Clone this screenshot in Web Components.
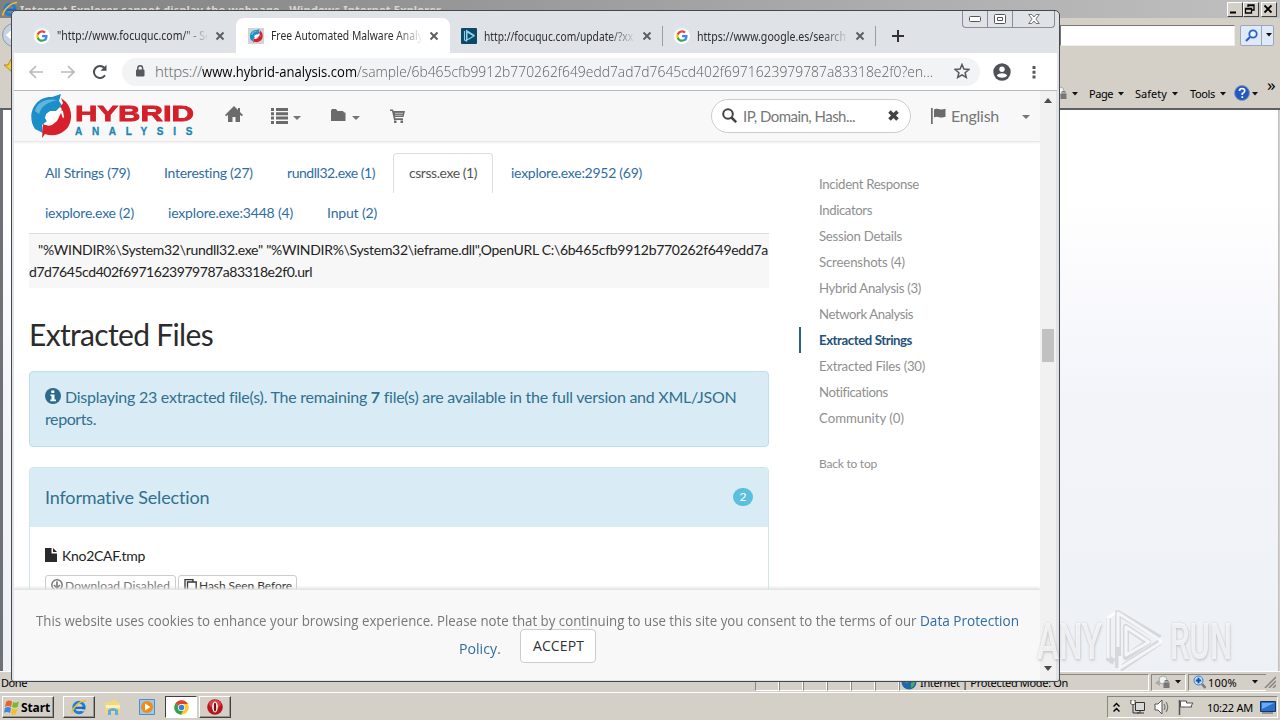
<!DOCTYPE html>
<html lang="en"><head><meta charset="utf-8"><title>Desktop</title>
<style>body{margin:0;width:1280px;height:720px;overflow:hidden;font-family:"Noto Sans","Liberation Sans",sans-serif}</style></head>
<body><desk-top></desk-top>
<script>
const def=(name,html,after)=>{const t=document.createElement('template');t.innerHTML=html;
customElements.define(name,class extends HTMLElement{connectedCallback(){if(this.shadowRoot)return;this.attachShadow({mode:'open'}).append(t.content.cloneNode(true));if(after)after(this,this.shadowRoot)}})};

const G='<path fill="#4285f4" d="M15 8.2c0-.5 0-1-.1-1.4H8v2.7h3.9a3.4 3.4 0 0 1-1.4 2.2v1.9h2.4C14.2 12.3 15 10.4 15 8.2z"/><path fill="#34a853" d="M8 15.2c1.9 0 3.6-.6 4.8-1.7l-2.3-1.8c-.7.4-1.5.7-2.5.7-1.9 0-3.5-1.3-4.1-3H1.5v1.9A7.2 7.2 0 0 0 8 15.2z"/><path fill="#fbbc05" d="M3.9 9.4a4.3 4.3 0 0 1 0-2.800V4.700H1.500a7.200 7.200 0 0 0 0 6.500z"/><path fill="#ea4335" d="M8 3.600c1.100 0 2 .4 2.800 1.100l2-2A7.200 7.200 0 0 0 1.500 4.700l2.400 1.900c.6-1.700 2.200-3 4.100-3z"/>';
const swirl='<path fill="#1c8fc9" d="M31 0 29 7l4 6-5 6-7-4-7 6 3 6-5 4 1 8-8-4C-4 22 4 2 22 3z"/><path fill="#8ed0ee" opacity=".6" d="M5 17C7 8 16 4 28 6 18 8 12 11 9 20z"/><path fill="#d8202c" d="m31 4 5 4c8 9 6 24-2 29-6 5-13 5-19 3l-3 4 1-14 9 3 7-3 5-7-1-6-4-2 4-6z"/><path fill="#1c8fc9" d="m13 16 9-5 6 4-5 5-5 1-5 5z"/><path fill="#d8202c" d="m31 19 3 8-9 8-11-2 8-2 5-4z"/><path fill="#fff" d="m30 13-4 4-6 0-4 3-1 4 3 5-5 2 7 0 0-3 2-1 1-3 4-1 3-3-1-2 3-3z"/>';
const IE='<circle cx="8" cy="8.500" r="5.200" fill="none" stroke="#1d7fdc" stroke-width="3"/><path d="M4 8.800h10" stroke="#1668c0" stroke-width="2.200"/><path d="M10.500 10.500h4l-1.500 2-3-.5z" fill="#d5d6d5"/><path d="M1 14.500C.5 10 8 2 15 1.500" fill="none" stroke="#f4bd2a" stroke-width="1.700"/>';
const icons={
g:[16,16,'<circle cx="8" cy="8" r="8" fill="#fff"/><g transform="translate(1.700 1.700) scale(.79)">'+G+'</g>'],
hy:[16,16,'<path fill="#d3d3d3" d="M0 0h16v16H0z"/><g transform="translate(1.500 1) scale(.32)">'+swirl+'</g>'],
swirl:[42,44,swirl],
any:[16,16,'<rect width="16" height="16" rx="1" fill="#0c4867"/><path d="M6 4v8l7-4zM3.500 3v9l2 1V2.500l8 5" fill="none" stroke="#8fd0ea" stroke-width="1.100"/>'],
x:[10,10,'<path d="m1.500 1.500 7 7m0-7-7 7" stroke="#5a5d61" stroke-width="1.900"/>'],
plus:[12,12,'<path d="M6 0v12M0 6h12" stroke="#303236" stroke-width="2"/>'],
back:[14,14,'<path d="M14 7H1.500M7 1 1 7l6 6" fill="none" stroke="#b8babd" stroke-width="1.700"/>'],
fwd:[14,14,'<path d="M0 7h12.500M7 1l6 6-6 6" fill="none" stroke="#b8babd" stroke-width="1.700"/>'],
reload:[16,16,'<path d="M13 11.300A6 6 0 1 1 12.400 4" fill="none" stroke="#4b4e52" stroke-width="2"/><path d="M14.500.8v6h-6z" fill="#4b4e52"/>'],
lock:[10,12,'<rect x="1" y="4.500" width="8.500" height="7" rx="1" fill="#55585c"/><path d="M2.800 5V3.200a2.400 2.400 0 0 1 4.800 0V5" fill="none" stroke="#55585c" stroke-width="1.400"/>'],
star:[16,16,'<path d="m8 1.500 1.900 4.600 5 .4-3.800 3.200 1.200 4.800L8 11.900l-4.300 2.600 1.200-4.800L1.100 6.500l5-.4z" fill="none" stroke="#55585c" stroke-width="1.500"/>'],
avatar:[18,18,'<circle cx="9" cy="9" r="8.700" fill="#4f5358"/><circle cx="9" cy="6.300" r="2.700" fill="#fff"/><path d="M3.800 12.500c2-3 8.400-3 10.400 0-2.300 3-8 3-10.400 0z" fill="#fff"/>'],
dots:[4,14,'<path d="M.5 1h3v3h-3zM.5 5.700h3v3h-3zM.5 10.400h3v3h-3z" fill="#55585c"/>'],
home:[18,17,'<path d="M9 0 0 9l1 1.200L3 9v7h4.500v-5h3v5H15V9l2 1.200L18 9l-3-3V2h-2v2z" fill="#6b6b6b"/>'],
list:[17,16,'<path d="M0 0h3v3H0zm5 0h12v3H5zM0 4.300h3v3H0zm5 0h12v3H5zM0 8.600h3v3H0zm5 0h12v3H5zM0 12.900h3v3H0zm5 0h12v3H5z" fill="#6b6b6b"/>'],
caret:[8,4,'<path d="M0 0h8L4 4z" fill="#757575"/>'],
folder:[15,13,'<path d="M0 1.500 1 0h4l1.500 2H12l1 1.500h1.500V12H0z" fill="#6b6b6b"/>'],
cart:[16,14,'<path d="M0 .5h3l.6 1.600H15l-1.500 6H5l.4 1.200H13V11H4L2 2H0zM4 11.500h2.500V14H4zm6.500 0H13V14h-2.500z" fill="#6b6b6b"/><path d="M5 4.300h8M5 6.300h7.500" stroke="#f8f8f8" stroke-width=".6"/>'],
search:[15,15,'<circle cx="6" cy="6" r="4.800" fill="none" stroke="#444" stroke-width="2"/><path d="m9.500 9.500 4.700 4.700" stroke="#444" stroke-width="2.500"/>'],
clear:[11,11,'<path d="m1.500 1.500 8 8m0-8-8 8" stroke="#444" stroke-width="3.600"/>'],
flag:[15,16,'<path d="M0 0h1.700v16H0zM3 1.500C6-.5 8 3 14.500.8v8C9 11 6.500 7 3 9.500z" fill="#6b6b6b"/>'],
info:[16,16,'<circle cx="8" cy="8" r="8" fill="#2b6a8a"/><path d="M6.300 2.500h3v2.500h-3zM5.500 6.500h4v5H11v1.700H5.300v-1.700h1.200V8h-1z" fill="#fff"/>'],
file:[12,14,'<path d="M0 0h6.500v5.500H12V14H0zM8 0l4 4H8z" fill="#2a2a2a"/>'],
down:[12,12,'<circle cx="6" cy="6" r="5.200" fill="none" stroke="#777" stroke-width="1.500"/><path d="M6 2.500V9M3 6l3 3 3-3" fill="none" stroke="#777" stroke-width="1.700"/>'],
copy:[13,13,'<path d="M3.500 3h8.700v10H3.500zM1 10V.7h8V3" fill="none" stroke="#333" stroke-width="1.300"/>'],
up:[8,5,'<path d="M0 5h8L4 0z" fill="#4a4a4a"/>'],dn:[8,5,'<path d="M0 0h8L4 5z" fill="#4a4a4a"/>'],
bc:[6,4,'<path d="M0 0h6L3 3.500z" fill="#111"/>'],
ie:[16,16,IE],
exp:[18,17,'<path d="M1 3h6l1-2h5v3h3v10H1z" fill="#f2d684"/><path d="M2 6h14v3H2z" fill="#fcf0b8"/><path d="M4 16v-5q5-4 10 0v5h-3v-4H7v4z" fill="#5db1d8"/>'],
play:[16,16,'<path d="M.5.5h15v15H.5z" fill="#9cc9ec" stroke="#4b8ec8"/><circle cx="8" cy="8" r="6" fill="#f08a18"/><path d="M6 4.500 11.500 8 6 11.500z" fill="#fff"/>'],
chrome:[15,15,'<circle cx="7.500" cy="7.500" r="7.200" fill="#f9cc2a"/><path d="M7.500 7.500 1.300 3.800A7.200 7.200 0 0 1 13.800 4H7.500z" fill="#e3402d"/><path d="M1.300 3.800A7.200 7.200 0 0 0 7 14.700l3-5.700-2.500-1.500z" fill="#31a350"/><circle cx="7.500" cy="7.500" r="3.600" fill="#fff"/><circle cx="7.500" cy="7.500" r="2.800" fill="#3d7de0"/>'],
opera:[16,16,'<circle cx="8" cy="8" r="7.800" fill="#b8141c"/><ellipse cx="8" cy="5" rx="6" ry="4" fill="#e4666a" opacity=".6"/><ellipse cx="8" cy="8" rx="2.800" ry="5.400" fill="#fff"/><ellipse cx="8" cy="8" rx="1.200" ry="4.500" fill="#7d0c10"/>'],
win:[16,16,'<path d="M2 3q3-2.500 6-.5L7 8Q4 6 1 8z" fill="#e8642a"/><path d="M9 3q3 1.500 6-.5L13.500 8Q11 9.500 8 8z" fill="#7cb82f"/><path d="M1 9q3-2 6 0l-1 5q-3-2-6-.2z" fill="#3f87d9"/><path d="M8 9.500q3 1.500 5.500 0L12 15q-3 1.500-5 0z" fill="#f6c023"/>'],
chev:[7,11,'<path d="m.5 4.500 3-3 3 3m-6 5 3-3 3 3" fill="none" stroke="#000" stroke-width="1.500"/>'],
net:[16,16,'<path d="M5.500 3.500h9v8h-9z" fill="#d8d8d8" stroke="#333"/><path d="M1 1v4h4V1M3 5v9h6M7 14h7M10 12v2" fill="none" stroke="#333"/><path d="M1.500 2h3v3h-3z" fill="#fff"/>'],
snd:[16,16,'<path d="M1 5h3l4-4v14l-4-4H1z" fill="#fff" stroke="#555"/><path d="M10 5q2 3 0 6m2-8q3.500 5 0 10" fill="none" stroke="#777" stroke-width="1.200"/>'],
wf:[16,16,'<path d="M1.500 1v15" stroke="#555" stroke-width="1.500"/><path d="M2.500 2h6v2H15l-2 3 1 1H8.500V8h-6z" fill="#fff" stroke="#555"/>'],
desk:[16,13,'<path d="M.5.5h15v10H.5z" fill="#2c6ecb" stroke="#16365f"/><path d="M2 2h12L2 8z" fill="#69aaf0"/><path d="M2 12h11" stroke="#555"/>'],
globe:[16,16,'<circle cx="8" cy="8" r="7.500" fill="#2466ae"/><path d="M3 4q4-4 6 0l-1 4-3 1-2-2zm7 5 4-2q0 5-4 7z" fill="#4bb04f"/>'],
zoom:[13,14,'<circle cx="5.500" cy="5.500" r="4.500" fill="#bfe0fa" stroke="#3b7cc8"/><path d="M5.500 2.800v5.400M2.800 5.500h5.400" stroke="#1452a8" stroke-width="2"/><path d="m9 9 3.500 4" stroke="#777" stroke-width="2.500"/>'],
priv:[15,14,'<path d="m0 8 5-4v7z" fill="#aaa"/><circle cx="8" cy="5" r="4" fill="#f1f1f1" stroke="#aaa"/><path d="M8.500 7.500h6V13h-6z" fill="#777"/><path d="M10 7.500V5.500h3v2" fill="none" stroke="#777"/>'],
help:[16,16,'<circle cx="8" cy="8" r="7.500" fill="#2458c2" stroke="#8a98b8"/><path d="M5.500 6q0-2.500 2.600-2.500T10.700 6Q10.500 7.500 8.300 8.500V10m0 1.300v1.700" fill="none" stroke="#fff" stroke-width="1.700"/>'],
mag:[13,13,'<circle cx="8" cy="5" r="3.700" fill="#e8f3ff" stroke="#2b62c8" stroke-width="1.800"/><path d="m5 8-4 4" stroke="#2b62c8" stroke-width="2.200"/>'],
chair:[12,6,'<rect x=".5" y=".5" width="11" height="5" rx="1" fill="#fff" stroke="#555"/>'],
cmax:[12,10,'<rect x=".5" y=".5" width="11" height="9" rx="1" fill="#fff" stroke="#555"/><path d="M3.500 3.500h5v3h-5z" fill="#fff" stroke="#555"/>'],
cx:[12,10,'<path d="M.7.5h3.200L6 3 8.100.5h3.200L7.900 5l3.400 4.500H8.100L6 7 3.900 9.500H.7L4.100 5z" fill="#fff" stroke="#666" stroke-width=".9"/>'],
min:[12,10,'<path d="M2 8.500h6" stroke="#000" stroke-width="2"/>'],
res:[12,10,'<path d="M4 3V1h6v5H8M4 1.500h6M1.500 4.500h6V9h-6zM1.500 5h6" fill="none" stroke="#000" stroke-width="1.300"/>'],
cl:[12,10,'<path d="m2.500 1.500 7 7m0-7-7 7" stroke="#000" stroke-width="1.800"/>'],
fav:[10,18,'<path d="M0 7h4l3-6 3 6v10l-4-5z" fill="#f5cf3a" stroke="#b68b1b"/>'],
orb:[18,24,'<circle cx="14" cy="12" r="11.500" fill="#c5d2e0" stroke="#8c98a5"/><path d="m14 7-6 5 6 5" fill="none" stroke="#fff" stroke-width="3"/>'],
grip:[12,12,'<path d="M12 1 1 12M12 5 5 12M12 9 9 12" stroke="#868278" stroke-width="1.500"/>'],
wm:[60,64,'<g fill="none" stroke-linejoin="round"><path d="M2 9v40l6 4M12 59V4l42 25M54 33 14 60M20 18v30l22-15z" stroke="#9da0a5" stroke-opacity=".3" stroke-width="6"/><path d="M2 49V9l7-5M12 38V4l42 27v3L14 59V47M20 46V18l23 15z" stroke="#fff" stroke-opacity=".75" stroke-width="3"/></g>']
};
customElements.define('ui-icon',class extends HTMLElement{connectedCallback(){if(this.shadowRoot)return;const [w,h,b]=icons[this.getAttribute('n')];
this.attachShadow({mode:'open'}).innerHTML=`<style>:host{display:block;flex:none;width:${w}px;height:${h}px}svg{display:block}</style><svg width="${w}" height="${h}" viewBox="0 0 ${w} ${h}">${b}</svg>`}});

/* One line of text set to an exact measure: tracking by default, horizontal scaling with "stretch". */
customElements.define('fit-text',class extends HTMLElement{connectedCallback(){if(this.shadowRoot)return;
const r=this.attachShadow({mode:'open'});r.innerHTML='<style>:host{display:inline-block;flex:none;white-space:pre;text-align:left}span{display:inline-block;transform-origin:0 50%}</style><span><slot></slot></span>';
const w=+this.getAttribute('w'),s=r.querySelector('span');const n=s.getBoundingClientRect().width;this.style.width=w+'px';
if(this.hasAttribute('stretch'))s.style.transform=`scaleX(${w/n})`;else s.style.letterSpacing=(w-n)/this.textContent.length+'px'}});

def('browser-tab',`<style>:host{display:flex;align-items:center;box-sizing:border-box;height:35px;margin-top:7px;flex:none;font:12px "Noto Sans",sans-serif;color:#2b2d30;padding-left:12px;border-radius:8px 8px 0 0}
:host([active]){background:#fff}
.t{width:150px;margin-left:7px;overflow:hidden;-webkit-mask:linear-gradient(90deg,#000 125px,transparent 152px)}:host([sep]){border-right:1px solid #9a9da2;border-radius:0;height:20px;margin-top:15px}ui-icon.x{margin-left:8px}</style>
<span class="i"></span><div class="t"><slot></slot></div><ui-icon class="x" n="x"></ui-icon>`,(h,r)=>{r.querySelector('.i').innerHTML=`<ui-icon n="${h.getAttribute('icon')}"></ui-icon>`});

def('side-link',`<style>:host{display:flex;align-items:center;height:26px;box-sizing:border-box;padding:0 0 0 18px;border-left:2px solid transparent;font-size:13.200px;color:#8f8f8f}:host([active]){border-color:#2b6080;color:#23527c;font-weight:700}</style><slot></slot>`);
def('string-tab',`<style>:host{display:flex;align-items:center;box-sizing:border-box;height:40px;padding:0 15px 2px;border:1px solid transparent;border-bottom:0;border-radius:4px 4px 0 0;font-size:14px;color:#2f6da3}:host([active]){border-color:#ddd;color:#555}</style><slot></slot>`);

def('chrome-window',`<style>
:host{display:flex;flex-direction:column;box-sizing:border-box;border:1px solid #46484d;border-radius:5px 5px 3px 3px;background:#dfe2e7;overflow:hidden}
.strip{display:flex;height:42px;padding-left:10px;flex:none}
.wb{display:flex;margin-left:auto;margin-right:4px;height:16px;border:1px solid #8a8d93;border-top:0;border-radius:0 0 4px 4px}.wb div{display:flex;align-items:center;justify-content:center;border-right:1px solid #8a8d93;width:24px}.wb div:last-child{width:41px;border:0}
.plus{margin:19px 0 0 16px}
.bar{display:flex;align-items:center;height:37px;background:#fff;margin:0 2px;border-bottom:1px solid #b6b8b9;padding-left:15px;flex:none}
.omni{display:flex;align-items:center;box-sizing:border-box;width:858px;height:28px;border-radius:14px;background:#f1f3f4;margin-left:14px;padding:0 0 1px 13px;font:300 15px "Open Sans",sans-serif;color:#5c5f63}
.d{color:#000;font-weight:400}
.view{display:flex;flex:1;min-height:0;margin:0 3px 1px 2px}
.sb{width:16px;background:#f1f1f1;display:flex;flex-direction:column;align-items:center;padding:7px 0 9px;box-sizing:border-box}
.thumb{width:12px;height:33px;background:#c1c1c1;margin:226px 0 auto}
hybrid-page{width:1026px;flex:none}
</style>
<div class="strip"><browser-tab icon="g" style="width:214px"><fit-text stretch w="154">"http://www.focuquc.com/" - Se</fit-text></browser-tab>
<browser-tab active icon="hy" style="width:214px"><fit-text stretch w="152">Free Automated Malware Analy</fit-text></browser-tab>
<browser-tab sep icon="any" style="width:213px;padding-left:11px"><fit-text stretch w="155">http://focuquc.com/update/?xx=</fit-text></browser-tab>
<browser-tab sep icon="g" style="width:213px;padding-left:11px"><fit-text stretch w="149">https://www.google.es/search</fit-text></browser-tab>
<ui-icon class="plus" n="plus"></ui-icon><div class="wb"><div><ui-icon n="chair"></ui-icon></div><div><ui-icon n="cmax"></ui-icon></div><div><ui-icon n="cx"></ui-icon></div></div></div>
<div class="bar"><ui-icon n="back"></ui-icon><ui-icon n="fwd" style="margin-left:18px"></ui-icon><ui-icon n="reload" style="margin-left:17px"></ui-icon>
<div class="omni"><ui-icon n="lock"></ui-icon><fit-text w="47" style="margin-left:10px">https://</fit-text><fit-text stretch class="d" w="155">www.hybrid-analysis.com</fit-text><fit-text stretch w="576">/sample/6b465cfb9912b770262f649edd7ad7d7645cd402f6971623979787a83318e2f0?en...</fit-text><ui-icon n="star" style="margin-left:21px"></ui-icon></div>
<ui-icon n="avatar" style="margin-left:13px"></ui-icon><ui-icon n="dots" style="margin-left:21px"></ui-icon></div>
<div class="view"><hybrid-page></hybrid-page><div class="sb"><ui-icon n="up"></ui-icon><div class="thumb"></div><ui-icon n="dn"></ui-icon></div></div>`);

def('hybrid-logo',`<style>:host{display:flex;flex:none;width:164px}.w{margin:10px 0 0 3px;font-family:"Liberation Sans",sans-serif;font-weight:700}.a{font-size:22px;line-height:20px;height:20px;color:#d3202b;-webkit-text-stroke:.8px #d3202b}.b{margin-top:3px;font-size:10px;line-height:10px;height:10px;color:#1a86b4;-webkit-text-stroke:.3px}fit-text{display:block}</style>
<ui-icon n="swirl"></ui-icon><div class="w"><div class="a"><fit-text stretch w="119">HYBRID</fit-text></div><div class="b"><fit-text w="127">ANALYSIS</fit-text></div></div>`);

def('hybrid-page',`<style>
:host{display:flex;flex-direction:column;background:#fff;font-family:Lato,"Noto Sans",sans-serif;position:relative;overflow:hidden}
nav{display:flex;align-items:center;height:51px;box-sizing:border-box;padding-bottom:1px;background:#f8f8f8;border-bottom:1px solid #e9e9e9;box-shadow:0 1px 2px #eee;padding-left:16px;flex:none;color:#777;font-size:16px}
.s{display:flex;align-items:center;box-sizing:border-box;width:200px;height:34px;border:1px solid #ccc;border-radius:17px;background:#fff;padding-left:10px;font-size:15px}
main{display:flex;padding:11px 0 0 15px}
.c{width:740px;flex:none}.tabs{display:flex;flex-wrap:wrap;gap:0 2px;border-bottom:1px solid #ddd}
.code{background:#f7f7f7;height:49px;padding-top:5px;font-size:14px;line-height:22px;color:#222}.code fit-text{display:block}
h2{margin:26px 0 0;font-weight:400;font-size:30px;line-height:40px;color:#2b2b2b}
.alert{box-sizing:border-box;height:76px;margin-top:17px;border:1px solid #bcdfeb;border-radius:4px;background:#d9ecf5;color:#31708f;padding:14px 15px;font-size:16px;line-height:22px}
.row{display:flex;align-items:center}
.panel{margin-top:20px;border:1px solid #d3e4eb;border-radius:4px;height:200px;}
.ph{display:flex;align-items:center;justify-content:space-between;height:59px;box-sizing:border-box;background:#d9ecf5;padding:0 15px 2px;color:#31708f;font-size:18px}
.badge{width:20px;height:18px;border-radius:10px;background:#5bc0de;color:#fff;font-size:12px;line-height:18px;text-align:center}
.btn{display:flex;align-items:center;box-sizing:border-box;height:22px;border:1px solid #ccc;border-radius:3px;padding:0 0 2px 5px;font-size:12px;color:#333;gap:2px}
aside{padding:18px 0 0 30px}
.cookie{position:absolute;left:0;right:0;bottom:0;height:91px;background:#f8f8f8;border-top:1px solid #e4e4e4;box-shadow:0 -1px 3px #ddd;color:#777;font:15px/28px "Open Sans",sans-serif;box-sizing:border-box;padding:16px 0 0 22px}
.cookie b{font-weight:400;color:#2f6da3}.acc{box-sizing:border-box;width:76px;height:34px;border:1px solid #ccc;border-radius:4px;background:#fff;color:#333;font-size:14px;line-height:32px;padding-left:12px;margin-left:20px;margin-top:-5px}
</style>
<nav><hybrid-logo></hybrid-logo><ui-icon n="home" style="margin:-3px 0 0 31px"></ui-icon><ui-icon n="list" style="margin-left:28px"></ui-icon><ui-icon n="caret" style="margin:4px 0 0 5px"></ui-icon><ui-icon n="folder" style="margin-left:30px"></ui-icon><ui-icon n="caret" style="margin:4px 0 0 6px"></ui-icon><ui-icon n="cart" style="margin-left:30px"></ui-icon>
<div class="s" style="margin-left:305px"><ui-icon n="search"></ui-icon><fit-text w="112" style="margin-left:6px">IP, Domain, Hash...</fit-text><ui-icon n="clear" style="margin-left:33px"></ui-icon></div>
<ui-icon n="flag" style="margin-left:20px"></ui-icon><fit-text w="48" style="margin:-1px 0 0 5px">English</fit-text><ui-icon n="caret" style="margin:3px 0 0 23px"></ui-icon></nav>
<main><div class="c"><div class="tabs"><string-tab><fit-text w="85">All Strings (79)</fit-text></string-tab><string-tab><fit-text w="89">Interesting (27)</fit-text></string-tab><string-tab><fit-text w="88">rundll32.exe (1)</fit-text></string-tab><string-tab active><fit-text w="68">csrss.exe (1)</fit-text></string-tab><string-tab><fit-text w="131">iexplore.exe:2952 (69)</fit-text></string-tab><string-tab><fit-text w="89">iexplore.exe (2)</fit-text></string-tab><string-tab><fit-text w="125">iexplore.exe:3448 (4)</fit-text></string-tab><string-tab><fit-text w="50">Input (2)</fit-text></string-tab></div>
<div class="code"><fit-text w="730" style="margin-left:9px">"%WINDIR%\\System32\\rundll32.exe" "%WINDIR%\\System32\\ieframe.dll",OpenURL C:\\6b465cfb9912b770262f649edd7a</fit-text><fit-text w="283">d7d7645cd402f6971623979787a83318e2f0.url</fit-text></div>
<h2><fit-text w="184">Extracted Files</fit-text></h2>
<div class="alert"><div class="row"><ui-icon n="info" style="margin-top:-2px"></ui-icon><fit-text w="671" style="margin-left:4px">Displaying 23 extracted file(s). The remaining <b>7</b> file(s) are available in the full version and XML/JSON</fit-text></div><fit-text w="51">reports.</fit-text></div>
<div class="panel"><div class="ph"><fit-text w="165">Informative Selection</fit-text><span class="badge">2</span></div>
<div class="row" style="padding:18px 0 0 15px;height:20px;font-size:14px;color:#222"><ui-icon n="file"></ui-icon><fit-text w="83" style="margin-left:5px">Kno2CAF.tmp</fit-text></div>
<div class="row" style="padding:10px 0 0 15px"><div class="btn" style="width:131px;color:#777"><ui-icon n="down"></ui-icon><fit-text w="105">Download Disabled</fit-text></div><div class="btn" style="width:119px;margin-left:2px"><ui-icon n="copy"></ui-icon><fit-text w="93">Hash Seen Before</fit-text></div></div></div></div>
<aside><side-link><fit-text w="100">Incident Response</fit-text></side-link><side-link><fit-text w="53">Indicators</fit-text></side-link><side-link><fit-text w="83">Session Details</fit-text></side-link><side-link><fit-text w="86">Screenshots (4)</fit-text></side-link><side-link><fit-text w="102">Hybrid Analysis (3)</fit-text></side-link><side-link><fit-text w="94">Network Analysis</fit-text></side-link><side-link active><fit-text w="93">Extracted Strings</fit-text></side-link><side-link><fit-text w="106">Extracted Files (30)</fit-text></side-link><side-link><fit-text w="69">Notifications</fit-text></side-link><side-link><fit-text w="85">Community (0)</fit-text></side-link><side-link style="font-size:12px;margin-top:19px"><fit-text w="58">Back to top</fit-text></side-link></aside></main>
<div class="cookie"><div class="row"><fit-text stretch w="884">This website uses cookies to enhance your browsing experience. Please note that by continuing to use this site you consent to the terms of our </fit-text><b><fit-text stretch w="99">Data Protection</fit-text></b></div><div class="row" style="padding-left:423px"><b style="margin-top:-2px"><fit-text stretch w="38">Policy</fit-text></b><fit-text w="3" style="margin-top:-2px">.</fit-text><div class="acc"><fit-text w="51">ACCEPT</fit-text></div></div></div>`);

def('ie-window',`<style>
:host{display:flex;flex-direction:column;background:#d4d0c8;font:11px "Noto Sans",sans-serif;color:#000}
.tt{display:flex;align-items:center;height:18px;background:linear-gradient(90deg,#808080,#c0c0c0);color:#d9d6cf;padding-left:2px;font-weight:700;flex:none}
.b{display:flex;width:14px;height:13px;border:1px solid;border-color:#fff #404040 #404040 #fff;background:#d4d0c8;overflow:hidden;align-items:center}
.addr{display:flex;align-items:center;height:34px;flex:none;justify-content:space-between}
.in{width:173px;height:19px;border:1px solid #777;border-right-color:#eee;border-bottom-color:#eee;background:#fff;margin-left:auto}
.go{display:flex;align-items:center;height:19px;border:1px solid #9aa7b8;border-radius:2px;background:#dfe9f7;width:32px;margin:0 6px 0 5px}
.cmd{display:flex;align-items:center;height:58px;box-sizing:border-box;flex:none;padding:27px 0 1px;border-bottom:2px solid #5f6062;justify-content:flex-end}
.cmd ui-icon[n=bc]{margin:2px 0 0 5px}
.body{flex:1;background:linear-gradient(#fff 15%,#f3f4fa 52%,#edf1f5);border-left:3px solid #6d7075;border-right:1px solid #c0c0c0;margin-right:1px}
.st{display:flex;height:21px;align-items:center;flex:none;border-top:1px solid #fff;box-sizing:border-box}
.p{box-sizing:border-box;height:17px;border:1px solid;border-color:#8a8780 #fff #fff #8a8780;width:24px;flex:none;display:flex;align-items:center}
</style>
<div class="tt"><ui-icon n="ie"></ui-icon><fit-text w="421" style="margin-left:2px">Internet Explorer cannot display the webpage - Windows Internet Explorer</fit-text><span style="flex:1"></span><span class="b"><ui-icon n="min"></ui-icon></span><span class="b"><ui-icon n="res"></ui-icon></span><span class="b" style="margin:0 3px 0 2px"><ui-icon n="cl"></ui-icon></span></div>
<div class="addr"><ui-icon n="orb"></ui-icon><span class="in"></span><span class="go"><ui-icon n="mag" style="margin-left:4px"></ui-icon><span style="width:1px;height:19px;background:#9aa7b8;margin:0 4px 0 3px"></span><ui-icon n="bc"></ui-icon></span></div>
<div class="cmd"><ui-icon n="fav" style="margin:-52px auto 0 4px"></ui-icon><ui-icon n="priv"></ui-icon><ui-icon n="bc"></ui-icon><fit-text w="24" style="margin-left:11px">Page</fit-text><ui-icon n="bc"></ui-icon><fit-text w="32" style="margin-left:11px">Safety</fit-text><ui-icon n="bc"></ui-icon><fit-text w="25" style="margin-left:12px">Tools</fit-text><ui-icon n="bc"></ui-icon><ui-icon n="help" style="margin-left:8px"></ui-icon><ui-icon n="bc" style="margin-left:2px"></ui-icon><fit-text w="9" style="font-size:17px;margin:-18px 4px 0 9px">»</fit-text></div>
<div class="body"></div>
<div class="st"><span style="width:755px;padding-left:1px;box-sizing:border-box;flex:none"><fit-text w="26">Done</fit-text></span><span class="p"></span><span class="p"></span><span class="p"></span><span class="p"></span><span class="p"></span><span class="p"></span><span class="p" style="width:250px;padding-left:1px"><ui-icon n="globe"></ui-icon><fit-text w="148" style="margin-left:3px">Internet | Protected Mode: On</fit-text></span><span class="p" style="width:35px;margin-left:2px;padding-left:3px"><ui-icon n="priv"></ui-icon><ui-icon n="bc" style="margin-left:5px"></ui-icon></span><span class="p" style="width:78px;margin-left:2px;padding-left:4px;border-right:0"><ui-icon n="zoom"></ui-icon><fit-text w="29" style="margin-left:2px">100%</fit-text><ui-icon n="bc" style="margin-left:15px"></ui-icon></span><ui-icon n="grip" style="margin-left:-2px"></ui-icon></div>`);

def('task-bar',`<style>
:host{display:flex;align-items:center;box-sizing:border-box;background:#d4d0c8;border-top:1px solid #fff;padding:1px 2px 0;font:11px "Noto Sans",sans-serif}
.b{display:flex;align-items:center;justify-content:center;box-sizing:border-box;height:22px;width:32px;border:1px solid;border-color:#fff #404040 #404040 #fff;box-shadow:inset -1px -1px #9a9790}
.on{background:#fff;border-color:#404040 #fff #fff #404040;box-shadow:none}
.tray{display:flex;align-items:center;box-sizing:border-box;margin-left:auto;width:171px;height:22px;border:1px solid;border-color:#8a8780 #fff #fff #8a8780;padding-left:5px}
</style>
<div class="b" style="width:52px;justify-content:flex-start;padding-left:1px"><ui-icon n="win"></ui-icon><fit-text w="29" style="font-weight:700;font-size:12px;margin-left:1px">Start</fit-text></div>
<div class="b" style="margin-left:9px"><ui-icon n="ie"></ui-icon></div><ui-icon n="exp" style="margin-left:9px"></ui-icon><ui-icon n="play" style="margin-left:17px"></ui-icon><div class="b on" style="margin-left:10px"><ui-icon n="chrome"></ui-icon></div><div class="b" style="margin-left:2px"><ui-icon n="opera"></ui-icon></div>
<div class="tray"><ui-icon n="chev"></ui-icon><ui-icon n="net" style="margin-left:10px"></ui-icon><ui-icon n="snd" style="margin-left:8px"></ui-icon><ui-icon n="wf" style="margin-left:8px"></ui-icon><fit-text w="46" style="margin-left:13px">10:22 AM</fit-text><ui-icon n="desk" style="margin-left:7px"></ui-icon></div>`);

def('any-run',`<style>:host{display:flex;align-items:center;color:rgba(255,255,255,.75);font:500 50px/60px Roboto,sans-serif;text-shadow:0 0 3px rgba(120,120,128,.3),1px 2px 3px rgba(130,130,138,.25)}</style><fit-text stretch w="65">ANY</fit-text><ui-icon n="wm" style="margin:-2px 4px 0 4px"></ui-icon><fit-text stretch w="62">RUN</fit-text>`);

def('desk-top',`<style>:host{display:flex;flex-direction:column;width:1280px;height:720px;position:relative;overflow:hidden;background:#d4d0c8}
ie-window{height:692px;flex:none}task-bar{height:28px;flex:none}
chrome-window{position:absolute;left:11px;top:10px;width:1049px;height:672px}
any-run{position:absolute;left:1037px;top:611px}</style><ie-window></ie-window><task-bar></task-bar><chrome-window></chrome-window><any-run></any-run>`);
</script></body></html>
